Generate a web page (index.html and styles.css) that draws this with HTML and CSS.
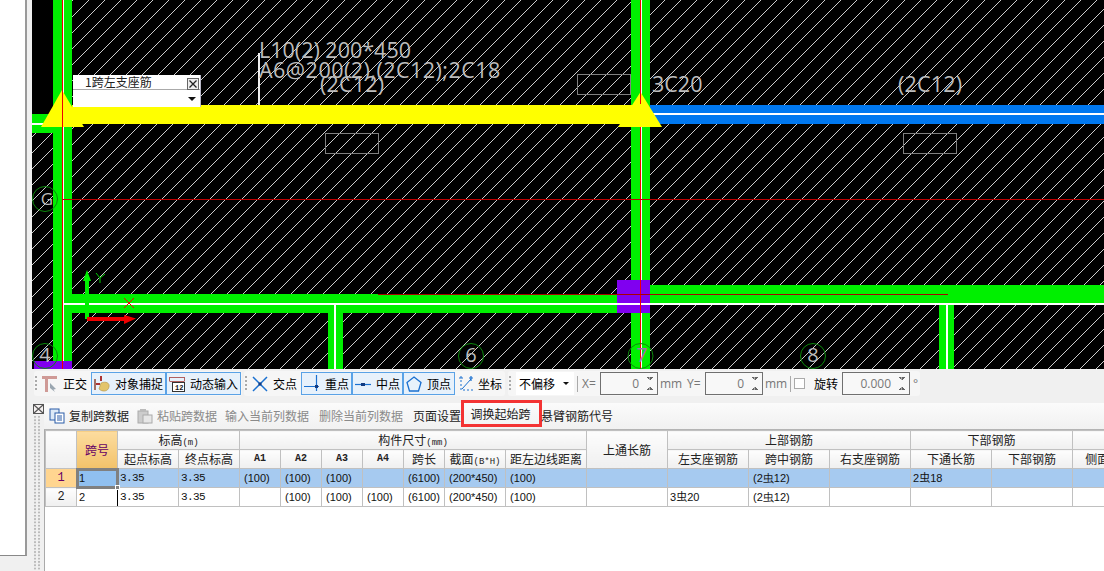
FILE: index.html
```html
<!DOCTYPE html>
<html lang="zh">
<head>
<meta charset="utf-8">
<title>梁平法表格</title>
<link rel="stylesheet" href="styles.css">
</head>
<body>
<div class="app">
  <aside class="side"><div class="side-white"></div></aside>
  <main class="main">
    <section class="canvas">
      <svg class="drawing" viewBox="32 0 1072 369" width="1072" height="369" xmlns="http://www.w3.org/2000/svg">
        <defs>
          <pattern id="hatch" width="16" height="16" patternUnits="userSpaceOnUse" patternTransform="translate(9 0)">
            <path d="M-1 17L17 -1" stroke="#cccccc" stroke-width="1" fill="none" shape-rendering="crispEdges"/>
          </pattern>
        </defs>
        <rect x="32" y="0" width="1072" height="369" fill="#000"/>
        <rect x="53" y="0" width="1051" height="369" fill="url(#hatch)"/>
        <rect x="32" y="133" width="21" height="236" fill="url(#hatch)"/>
        <g fill="none" stroke="#808080" stroke-width="1">
          <rect x="325.5" y="133.5" width="53" height="20"/>
          <rect x="577.5" y="74.5" width="53" height="20"/>
          <rect x="903.5" y="133.5" width="53" height="20"/>
        </g>
        <!-- green beams -->
        <g fill="#00f000">
          <rect x="53" y="0" width="19" height="369"/>
          <rect x="32" y="114" width="21" height="19"/>
          <rect x="631" y="0" width="19" height="369"/>
          <rect x="63" y="294" width="555" height="19"/>
          <rect x="650" y="285" width="454" height="19"/>
          <rect x="328" y="313" width="15" height="56"/>
          <rect x="939" y="304" width="15" height="65"/>
        </g>
        <g fill="#fff">
          <rect x="32" y="123" width="21" height="2"/>
          <rect x="63" y="303" width="555" height="2"/>
          <rect x="650" y="303" width="454" height="2"/>
          <rect x="334" y="305" width="2" height="64"/>
          <rect x="946" y="305" width="2" height="64"/>
          <rect x="63" y="0" width="1" height="369"/>
          <rect x="641" y="0" width="1" height="369"/>
        </g>
        <rect x="650" y="105" width="454" height="19" fill="#0078f0"/>
        <rect x="650" y="113" width="454" height="2" fill="#fff"/>
        <rect x="617" y="280" width="33" height="33" fill="#8000f0"/>
        <rect x="617" y="303" width="33" height="2" fill="#fff"/>
        <rect x="34" y="361" width="38" height="8" fill="#8000f0"/>
        <rect x="62" y="0" width="1" height="369" fill="#f00000"/>
        <rect x="640" y="0" width="1" height="369" fill="#f00000"/>
        <rect x="62" y="199" width="1042" height="1" fill="#c00000"/>
        <rect x="378" y="294" width="570" height="1" fill="#a80000"/>
        <!-- yellow span -->
        <rect x="72" y="105" width="560" height="19" fill="#ffff00"/>
        <path d="M62 90L84 127H41Z" fill="#ffff00"/>
        <path d="M640.5 92L662 127H618Z" fill="#ffff00"/>
        <rect x="62" y="90" width="1" height="37" fill="#f00000"/>
        <rect x="640" y="92" width="1" height="12" fill="#f00000"/>
        <rect x="258" y="53" width="2" height="52" fill="#eee"/>
        <!-- labels -->
        <g class="label">
          <text x="259" y="58">L10(2) 200*450</text>
          <text x="259" y="78" class="wide">A6@200(2),(2C12);2C18</text>
          <text x="320" y="92" class="tight">(2C12)</text>
          <text x="652" y="92">3C20</text>
          <text x="898" y="92" class="tight">(2C12)</text>
        </g>
        <!-- axis bubbles -->
        <g fill="none" stroke="#0c8a0c" stroke-width="1">
          <circle cx="45" cy="199" r="12.5"/>
          <circle cx="45" cy="356" r="12.5"/>
          <circle cx="471" cy="356" r="12.5"/>
          <circle cx="640.5" cy="356" r="12.5"/>
          <circle cx="813" cy="356" r="12.5"/>
        </g>
        <g class="axis">
          <text x="47" y="205" class="axis-g">G</text>
          <text x="45" y="362">4</text>
          <text x="471" y="362">6</text>
          <text x="642" y="362" class="axis-dim">7</text>
          <text x="813" y="362">8</text>
        </g>
        <!-- ucs gizmo -->
        <path d="M85 319V281H83L87 270L91 281H89V319Z" fill="#00f000"/>
        <path d="M87 317H124V315L136 318.500L124 324V321H87Z" fill="#f00000"/>
        <path d="M96 273L100 278L105 274M100 278V283" fill="none" stroke="#00d000"/>
        <path d="M124 298L134 308M134 298L124 308" fill="none" stroke="#f00000"/>
      </svg>
      <div class="tag">
        <div class="tag-title"><span>1跨左支座筋</span>
          <svg class="tag-close" width="12" height="12" viewBox="0 0 12 12"><rect x=".5" y=".5" width="11" height="11" fill="#eee" stroke="#666"/><path d="M2.500 2.500L9.500 9.500M9.500 2.500L2.500 9.500" stroke="#222" stroke-width="1.300"/></svg>
        </div>
        <div class="tag-input"><i class="caret"></i></div>
      </div>
    </section>

    <section class="toolbar">
      <div class="group group-a">
        <i class="grip"></i>
        <div class="tool plain">
          <svg class="ico" width="16" height="18" viewBox="0 0 16 18"><path d="M0 1H15V4H0ZM3 4H6V17H3Z" fill="#cf9a96"/><path d="M8 8L14 14L11.500 14.500L13 17L8 13Z" fill="#9aa6b0"/></svg>
          <span>正交</span>
        </div>
        <div class="tool on w75">
          <svg class="ico" width="16" height="18" viewBox="0 0 16 18"><path d="M7 1V6M2 9H6" stroke="#a33" stroke-width="2"/><path d="M1 4V15" stroke="#843" stroke-width="1.500"/><path d="M7 8C12 6 16 8 15 12C14 17 8 17 5 14Z" fill="#e3c46b" stroke="#b09040" stroke-width=".6"/></svg>
          <span>对象捕捉</span>
        </div>
        <div class="tool on w75">
          <svg class="ico" width="16" height="16" viewBox="0 0 16 16"><path d="M.5 1.500H15.500M.5 5.500H15.500M.5 1V5M15.500 1V5" stroke="#b06060" fill="none"/><rect x="3.500" y="6.500" width="12" height="9" fill="#fff" stroke="#333"/><text x="6" y="14" class="ico-num">12</text></svg>
          <span>动态输入</span>
        </div>
      </div>
      <div class="group group-b">
        <i class="grip"></i>
        <div class="tool plain">
          <svg class="ico" width="16" height="16" viewBox="0 0 16 16"><path d="M1 1L15 15M15 1L1 15" stroke="#1a70d0" stroke-width="1.500"/><rect x="6.500" y="6.500" width="3" height="3" fill="#123a80"/></svg>
          <span>交点</span>
        </div>
        <div class="tool on w51">
          <svg class="ico" width="16" height="18" viewBox="0 0 16 18"><path d="M0 11.500H15M12.500 0V16" stroke="#1a70d0" stroke-width="1.200"/><rect x="11" y="10" width="3" height="3" fill="#123a80"/></svg>
          <span>重点</span>
        </div>
        <div class="tool on w51">
          <svg class="ico" width="16" height="18" viewBox="0 0 16 18"><path d="M0 9.500H16" stroke="#1a70d0" stroke-width="1.200"/><rect x="6" y="8" width="4" height="3" fill="#123a80"/></svg>
          <span>中点</span>
        </div>
        <div class="tool on w52">
          <svg class="ico" width="16" height="16" viewBox="0 0 16 16"><path d="M8 1L15 6.500L12.500 15H3.500L1 6.500Z" fill="#e8f2fb" stroke="#1a70d0" stroke-width="1.300"/></svg>
          <span>顶点</span>
        </div>
        <div class="tool plain coord">
          <svg class="ico" width="16" height="18" viewBox="0 0 16 18"><path d="M3 1V15H15" fill="none" stroke="#1a70d0" stroke-dasharray="2 2"/><path d="M4 14L13 4" stroke="#1a70d0"/><path d="M1 3H5M13 1V6M11 3H15" stroke="#1a70d0" stroke-width="1.200"/></svg>
          <span>坐标</span>
        </div>
      </div>
      <div class="group group-c">
        <i class="grip"></i>
        <div class="combo"><span>不偏移</span><i class="caret"></i></div>
        <i class="sep"></i>
        <span class="lab dim x-lab">X=</span>
        <div class="spin w58"><span>0</span><b class="arrows"></b></div>
        <span class="lab dim mm">mm</span>
        <span class="lab dim y-lab">Y=</span>
        <div class="spin w58"><span>0</span><b class="arrows"></b></div>
        <span class="lab dim mm">mm</span>
        <i class="sep"></i>
        <i class="check"></i>
        <span class="lab rot">旋转</span>
        <div class="spin w68"><span>0.000</span><b class="arrows"></b></div>
        <span class="lab dim deg">°</span>
      </div>
    </section>

    <section class="lower">
      <div class="gutter">
        <svg width="11" height="10" viewBox="0 0 11 10" class="gutter-x"><rect x=".5" y=".5" width="10" height="9" fill="#f4f0f0" stroke="#555"/><path d="M1 1L10 9M10 1L1 9" stroke="#555" stroke-width="1.200"/></svg>
        <i class="dots"></i>
      </div>
      <div class="panel">
        <div class="actions">
          <svg class="act-ico" width="16" height="16" viewBox="0 0 16 16"><rect x="1" y="1" width="9" height="11" fill="#dce9f7" stroke="#2a5ca8"/><rect x="6" y="5" width="9" height="10" fill="#fff" stroke="#2a5ca8"/><path d="M8 8H13M8 10H13M8 12H13" stroke="#2a5ca8"/></svg>
          <span class="act w69">复制跨数据</span>
          <svg class="act-ico" width="16" height="16" viewBox="0 0 16 16"><rect x="1" y="3" width="10" height="12" fill="#ccc" stroke="#aaa"/><rect x="3" y="1" width="6" height="3" fill="#bbb"/><rect x="6" y="7" width="9" height="8" fill="#e6e6e6" stroke="#aaa"/></svg>
          <span class="act off w69">粘贴跨数据</span>
          <span class="act off w94">输入当前列数据</span>
          <span class="act off w94">删除当前列数据</span>
          <span class="act w48">页面设置</span>
          <span class="act hot">调换起始跨</span>
          <span class="act">悬臂钢筋代号</span>
        </div>
        <div class="grid-wrap">
        <table class="grid">
          <colgroup>
            <col class="c31"><col class="c41"><col class="c61"><col class="c61"><col class="c41"><col class="c41"><col class="c41"><col class="c41"><col class="c41"><col class="c61"><col class="c81"><col class="c81"><col class="c81"><col class="c81"><col class="c81"><col class="c81"><col class="c81"><col class="c81">
          </colgroup>
          <thead>
            <tr>
              <th rowspan="2"></th>
              <th rowspan="2" class="active-head">跨号</th>
              <th colspan="2">标高<small>(m)</small></th>
              <th colspan="7">构件尺寸<small>(mm)</small></th>
              <th rowspan="2">上通长筋</th>
              <th colspan="3">上部钢筋</th>
              <th colspan="2">下部钢筋</th>
              <th></th>
            </tr>
            <tr>
              <th>起点标高</th><th>终点标高</th>
              <th class="mono">A1</th><th class="mono">A2</th><th class="mono">A3</th><th class="mono">A4</th>
              <th>跨长</th><th>截面<small>(B*H)</small></th><th>距左边线距离</th>
              <th>左支座钢筋</th><th>跨中钢筋</th><th>右支座钢筋</th>
              <th>下通长筋</th><th>下部钢筋</th><th class="clip">侧面</th>
            </tr>
          </thead>
          <tbody>
            <tr class="sel">
              <th class="rowno sel-no">1</th>
              <td class="cur">1<i class="handle"></i></td>
              <td class="num">3.35</td><td class="num">3.35</td>
              <td class="p">(100)</td><td class="p">(100)</td><td class="p">(100)</td><td></td>
              <td class="p">(6100)</td><td class="p">(200*450)</td><td class="p">(100)</td>
              <td></td><td></td><td class="p">(2虫12)</td><td></td>
              <td class="v">2虫18</td><td></td><td></td>
            </tr>
            <tr>
              <th class="rowno">2</th>
              <td class="cur2">2</td>
              <td class="num">3.35</td><td class="num">3.35</td>
              <td></td><td class="p">(100)</td><td class="p">(100)</td><td class="p">(100)</td>
              <td class="p">(6100)</td><td class="p">(200*450)</td><td class="p">(100)</td>
              <td></td><td class="v">3虫20</td><td class="p">(2虫12)</td><td></td>
              <td></td><td></td><td></td>
            </tr>
          </tbody>
        </table>
        </div>
      </div>
    </section>
  </main>
</div>
</body>
</html>
```
FILE: styles.css
```css
* { box-sizing: border-box; }
html, body { margin: 0; height: 100%; overflow: hidden; background: #f0f0f0; }
body { font: 12px/16px "Noto Sans CJK SC", "Liberation Sans", sans-serif; color: #000; }
i, b { display: block; }

.app { display: flex; width: 1104px; height: 571px; }
.side { width: 32px; flex: none; background: #f0f0f0; }
.side-white { width: 27px; height: 556px; background: #fff; border-right: 2px solid #999; border-bottom: 1px solid #888; }
.main { width: 1072px; flex: none; display: flex; flex-direction: column; }

/* drawing */
.canvas { position: relative; height: 369px; flex: none; overflow: hidden; background: #000; }
.drawing { display: block; }
.label text { font: 21.5px "Open Sans", sans-serif; fill: #bcbcbc; }
.label .wide { letter-spacing: .48px; }
.label .tight { letter-spacing: .2px; }
.axis text { font: 20px "Open Sans", sans-serif; fill: #bdbdbd; text-anchor: middle; }
.axis .axis-g { font-size: 17px; }
.axis .axis-dim { fill: #a070b0; }
.tag { position: absolute; left: 41px; top: 75px; width: 128px; height: 32px; background: #fff; border-right: 1px solid #b8b8c8; }
.tag-title { height: 15px; border-bottom: 1px solid #aaa; display: flex; align-items: center; justify-content: space-between; padding: 0 1px 0 12px; line-height: 14px; color: #222; }
.tag-close { margin-top: 3px; }
.tag-input { height: 17px; position: relative; }
.caret { width: 0; height: 0; border: 4px solid transparent; border-top-color: #111; border-bottom: 0; }
.tag-input .caret { position: absolute; right: 4px; top: 7px; }

/* toolbar */
.toolbar { height: 34px; flex: none; background: #f0f0f0; padding: 2px 0 0 2px; display: flex; align-items: flex-start; gap: 2px; }
.group { height: 25px; background: #f6f6f6; border-radius: 3px; display: flex; align-items: center; padding-left: 1px; }
.group-a { width: 208px; }
.group-b { width: 261px; }
.group-c { width: 412px; margin-left: 1px; }
.grip { width: 2px; height: 16px; margin-right: 5px; flex: none; background: repeating-linear-gradient(#aaa 0 2px, transparent 2px 4px); }
.tool { height: 23px; display: flex; align-items: center; flex: none; white-space: nowrap; }
.tool.plain { gap: 5px; padding-right: 4px; }
.tool.on { background: #e7f1fb; border: 1px solid #5aa2e6; padding-left: 2px; gap: 5px; }
.w75 { width: 75px; }
.w51 { width: 51px; }
.w52 { width: 52px; }
.ico { flex: none; }
.ico-num { font: bold 7px "Liberation Mono", monospace; fill: #111; }
.tool.coord { margin-left: 3px; gap: 4px; }

.combo { width: 58px; height: 23px; background: #fff; display: flex; align-items: center; justify-content: space-between; padding: 0 5px 0 3px; flex: none; }
.combo .caret { border-width: 3px; border-bottom: 0; }
.group-c .sep { width: 1px; height: 16px; background: #aaa; margin: 0 3px; flex: none; }
.lab { white-space: nowrap; flex: none; }
.dim { color: #777; font-family: "Open Sans", sans-serif; font-size: 12px; }
.x-lab { width: 19px; padding-left: 1px; }
.y-lab { width: 18px; margin-left: 5px; }
.mm { width: 24px; padding-left: 2px; }
.deg { margin-left: 3px; }
.rot { margin: 0 4px 0 9px; }
.spin { height: 23px; background: #f8f8f8; border: 1px solid #707070; position: relative; text-align: right; padding: 0 18px 0 0; line-height: 21px; color: #777; font-family: "Open Sans", sans-serif; flex: none; }
.w58 { width: 58px; }
.w68 { width: 68px; }
.arrows { position: absolute; right: 4px; top: 4px; width: 7px; height: 13px;
  background:
    linear-gradient(45deg, transparent 50%, #666 50%) 0 0 / 3.5px 3px no-repeat,
    linear-gradient(-45deg, transparent 50%, #666 50%) 3.5px 0 / 3.5px 3px no-repeat,
    linear-gradient(135deg, transparent 50%, #666 50%) 0 10px / 3.5px 3px no-repeat,
    linear-gradient(-135deg, transparent 50%, #666 50%) 3.5px 10px / 3.5px 3px no-repeat; }
.check { width: 11px; height: 11px; border: 1px solid #aaa; background: #fff; flex: none; }

/* lower panel */
.lower { flex: 1; display: flex; min-height: 0; }
.gutter { width: 12px; flex: none; padding: 1px 0 0 1px; }
.gutter-x { display: block; }
.dots { width: 8px; height: 157px; margin: 2px 0 0 1px; background: radial-gradient(circle at 1px 1px, #bbb 1px, transparent 1.2px) 0 0 / 4px 3.3px; }
.panel { flex: 1; min-width: 0; display: flex; flex-direction: column; }
.actions { height: 26px; flex: none; display: flex; align-items: center; background: linear-gradient(#fbfbfb, #f1f1f1); padding-left: 5px; white-space: nowrap; }
.act-ico { flex: none; margin-right: 4px; }
.act { flex: none; color: #222; }
.act.off { color: #8a8a8a; }
.w69 { width: 68px; }
.w94 { width: 94px; }
.w48 { width: 48px; }
.hot { width: 81px; height: 27px; line-height: 21px; text-align: center; border: 3px solid #f33333; margin: -5px -1px 0 0; padding-right: 2px; }

.grid-wrap { flex: 1; min-height: 0; background: #fff; border-left: 1px solid #aaa; border-top: 1px solid #b4b4b4; overflow: hidden; }
.grid { border-collapse: collapse; table-layout: fixed; width: 1100px; }
.c31 { width: 31px; }
.c41 { width: 41px; }
.c61 { width: 61px; }
.c81 { width: 81px; }
.grid th, .grid td { border: 1px solid #c0c0c0; height: 19px; padding: 0; line-height: 16px; white-space: nowrap; overflow: hidden; }
.grid thead th { font-weight: 400; text-align: center; background: linear-gradient(#fdfdfd, #efefef); color: #222; }
.grid small { font-family: "Liberation Mono", monospace; font-size: 9px; line-height: 1; }
.grid .mono { font: bold 10px/16px "Liberation Mono", monospace; }
.grid .clip { text-align: left; padding-left: 12px; }
.grid thead .active-head { background: linear-gradient(#fcdc9f, #f2c26a); color: #660066; }
.rowno { font-weight: 400; background: linear-gradient(#fdfdfd, #efefef); color: #222; font-family: "Liberation Mono", monospace; }
.grid .sel-no { background: #ffd590; color: #660066; }
.grid td { font-family: "Liberation Sans", sans-serif; font-size: 11px; color: #111; padding-left: 2px; }
.grid td.p { padding-left: 4px; }
.grid td.num { font-family: "Liberation Mono", monospace; font-size: 11px; letter-spacing: -.6px; }
.grid td.v { font-family: "Liberation Sans", "Noto Sans CJK SC", sans-serif; }
.sel td { background: #a6caf0; }
.grid td.cur { background: #90c0f0; outline: 3px solid #808080; outline-offset: -2px; position: relative; overflow: visible; }
.handle { position: absolute; right: -3px; bottom: -3px; width: 5px; height: 5px; background: #808080; border: 1px solid #fff; }
.grid td.cur2 { border-right: 1px solid #000; }
```
